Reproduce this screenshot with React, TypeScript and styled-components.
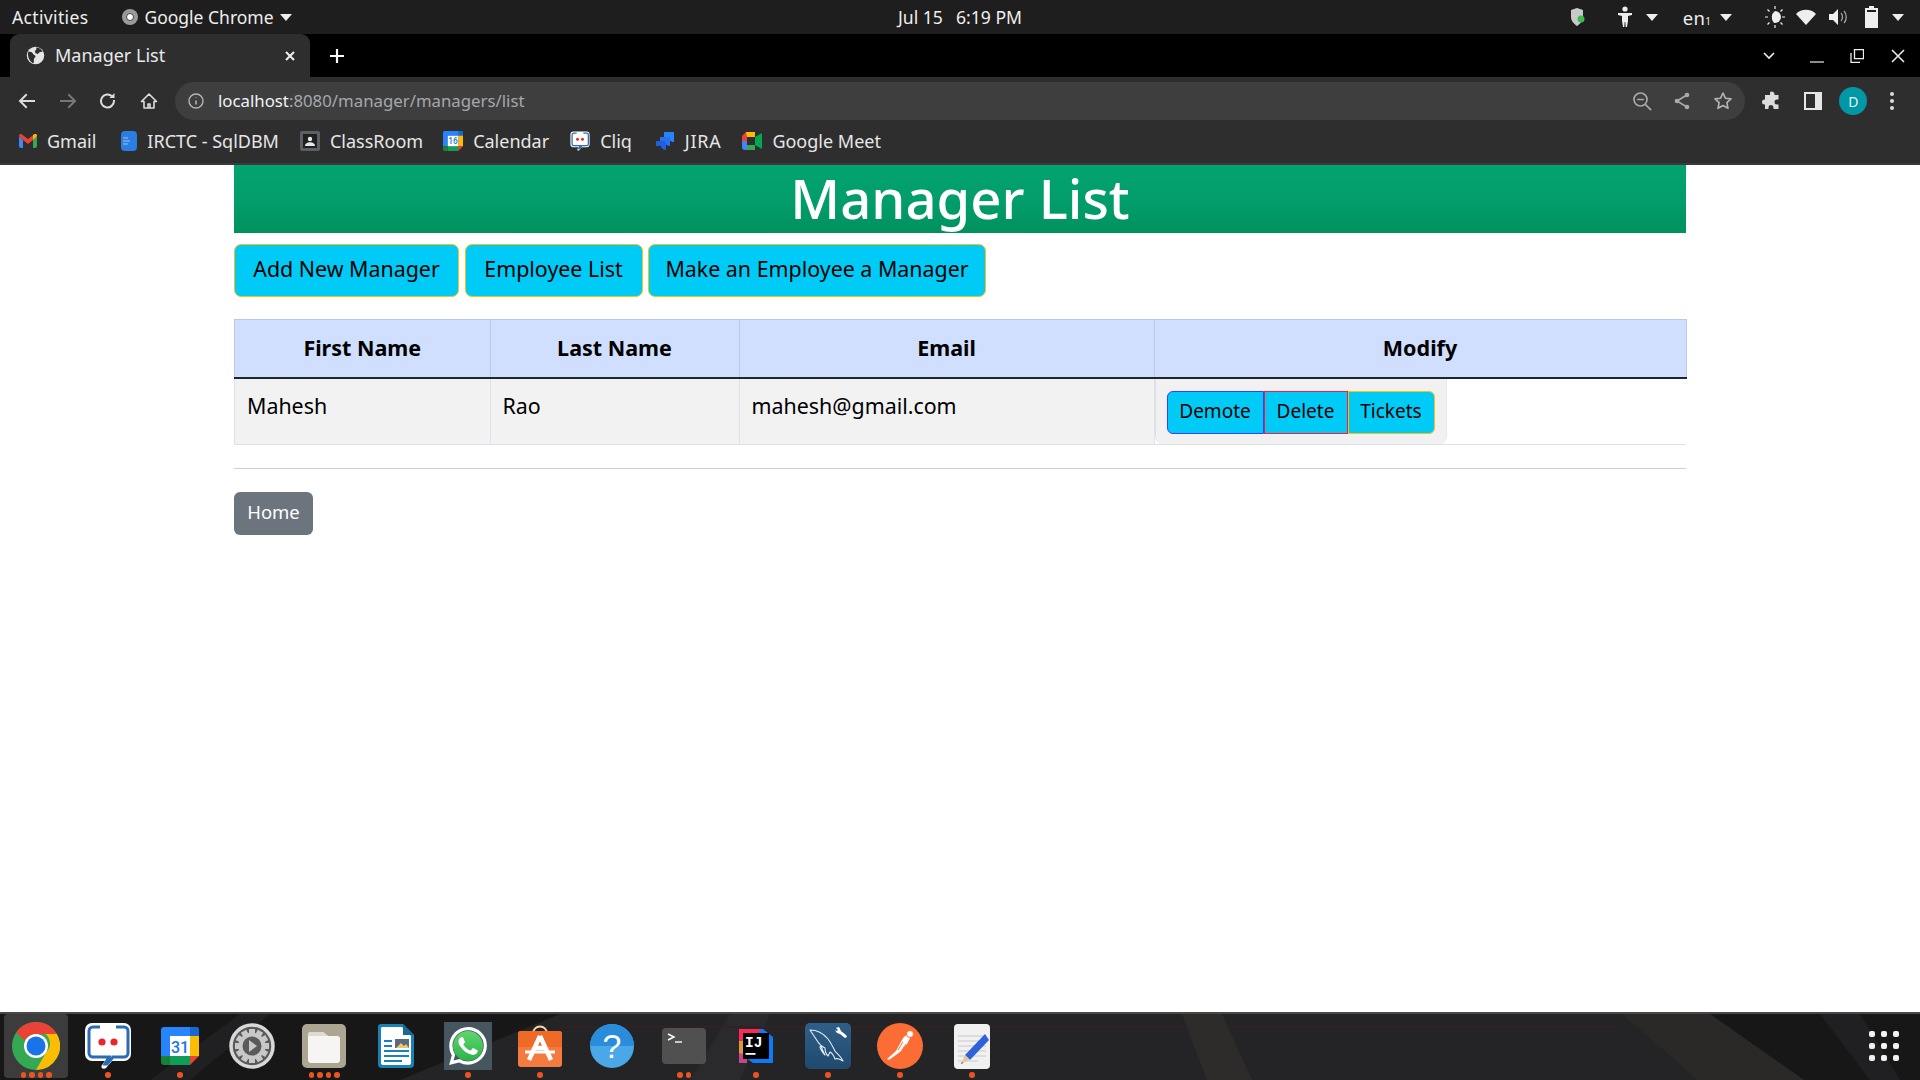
import React from "react";
import styled, { createGlobalStyle } from "styled-components";
import { SiWhatsapp } from "react-icons/si";

const UI = `"Noto Sans", "Open Sans", "DejaVu Sans", sans-serif`;

const Global = createGlobalStyle`
  html, body { margin: 0; padding: 0; height: 100%; background: #fff; overflow: hidden; }
  #root { height: 100%; }
  * { box-sizing: border-box; }
  body { font-family: ${UI}; }
`;

const Screen = styled.div`
  width: 1920px;
  height: 1080px;
  display: flex;
  flex-direction: column;
`;

/* ---------- GNOME top bar ---------- */
const TopBar = styled.div`
  height: 34px;
  flex: none;
  background: #1e1e1e;
  color: #eeeeec;
  display: grid;
  grid-template-columns: 1fr auto 1fr;
  align-items: center;
  font-size: 17.5px;
  padding: 0 12px;
`;
const BarLeft = styled.div`
  display: flex;
  align-items: center;
`;
const Activities = styled.span`
  letter-spacing: 0.35px;
`;
const BarRight = styled.div`
  display: flex;
  align-items: center;
  justify-content: flex-end;
  height: 100%;
  padding-right: 3px;
`;
const AppName = styled.span`
  display: flex;
  align-items: center;
  gap: 6px;
  margin-left: 34px;
`;
const Clock = styled.div`
  display: flex;
  gap: 13px;
  font-size: 17.6px;
`;
const Tray = styled.span<{ $w: number; $ml: number }>`
  width: ${(p) => p.$w}px;
  margin-left: ${(p) => p.$ml}px;
  display: flex;
  justify-content: center;
  align-items: center;
  flex: none;
`;
const Lang = styled.span`
  font-size: 18.5px;
  letter-spacing: 0.3px;
  white-space: nowrap;
`;
const Sub = styled.span`
  font-size: 10px;
`;

/* ---------- Chrome ---------- */
const TabStrip = styled.div`
  height: 43px;
  flex: none;
  background: #000;
  display: flex;
  align-items: flex-end;
  padding-left: 10px;
  color: #fff;
`;
const Tab = styled.div`
  width: 300px;
  height: 43px;
  background: #2e2e2e;
  border-radius: 9px 9px 0 0;
  display: flex;
  align-items: center;
  padding: 0 14px 0 16px;
  font-size: 18px;
  color: #e8eaed;
`;
const TabTitle = styled.span`
  flex: 1;
  margin: 0 0 2px 10px;
`;
const NewTab = styled.span`
  width: 26px;
  height: 43px;
  margin-left: 14px;
  display: flex;
  align-items: center;
  justify-content: center;
`;
const WindowControls = styled.div`
  margin-left: auto;
  height: 43px;
  display: flex;
  align-items: center;
  padding-right: 2px;
`;
const Ctl = styled.span<{ $w: number }>`
  width: ${(p) => p.$w}px;
  display: flex;
  justify-content: center;
`;

const Toolbar = styled.div`
  height: 43px;
  flex: none;
  background: #2e2e2e;
  display: flex;
  align-items: flex-start;
  padding: 5px 0 0 7px;
  color: #c7c7c7;
`;
const NavBtn = styled.span<{ $w?: number }>`
  width: ${(p) => p.$w || 40.5}px;
  height: 38px;
  display: flex;
  align-items: center;
  justify-content: center;
  flex: none;
`;
const Omnibox = styled.div`
  margin: 0 7px 0 6px;
  width: 1570px;
  height: 38px;
  border-radius: 19px;
  background: #3e3e3e;
  display: flex;
  align-items: center;
  padding-left: 13px;
  flex: none;
`;
const Url = styled.div`
  margin: 0 0 2px 14px;
  font-size: 16.8px;
  color: #a4a8ad;
  flex: 1;
  white-space: nowrap;
`;
const UrlHost = styled.span`
  color: #f1f3f4;
`;
const OmniIcons = styled.div`
  display: flex;
  margin-right: 2px;
`;
const Avatar = styled.span`
  width: 28px;
  height: 28px;
  border-radius: 50%;
  background: #0097a7;
  color: #e6f7f9;
  font-size: 14px;
  display: flex;
  align-items: center;
  justify-content: center;
`;

const Bookmarks = styled.div`
  height: 45px;
  flex: none;
  background: #2e2e2e;
  border-bottom: 2px solid #3a3a3a;
  display: flex;
  align-items: center;
  padding: 0 0 2px 19px;
  gap: 20px;
`;
const Bookmark = styled.span<{ $ml?: number; $ls?: number }>`
  display: flex;
  align-items: center;
  gap: 10px;
  margin-left: ${(p) => p.$ml || 0}px;
  letter-spacing: ${(p) => p.$ls || 0}px;
  color: #e6e6e6;
  font-size: 18px;
  white-space: nowrap;
`;

/* ---------- page ---------- */
const Page = styled.main`
  flex: 1;
  background: #fff;
  padding: 0 234px;
  color: #000;
`;
const Title = styled.h1`
  margin: 0;
  height: 68px;
  line-height: 66px;
  text-align: center;
  font-size: 54.4px;
  font-weight: 500;
  color: #fff;
  background: linear-gradient(180deg, #02a370 0%, #029c69 60%, #01905e 100%);
`;
const Actions = styled.div`
  display: flex;
  gap: 5.5px;
  margin-top: 11px;
`;
const ActionButton = styled.button<{ $w: number }>`
  width: ${(p) => p.$w}px;
  height: 53px;
  padding: 0 0 4px;
  border: 1.5px solid #ffc107;
  border-radius: 7px;
  background: #00cbf6;
  color: #000;
  font-family: ${UI};
  font-size: 21.4px;
`;
const Table = styled.table`
  width: 1451.5px;
  margin-top: 22px;
  border-collapse: collapse;
  table-layout: fixed;
`;
const Th = styled.th`
  height: 58px;
  background: #cfdffd;
  border: 1px solid #b9c9e8;
  border-bottom: 2px solid #1f2530;
  font-size: 21.5px;
  font-weight: 700;
  text-align: center;
  padding: 0 0 2px;
`;
const Td = styled.td`
  height: 65px;
  background: #f2f2f2;
  border: 1px solid #dee2e6;
  border-top: none;
  font-size: 21.4px;
  vertical-align: top;
  padding: 12px 12px 0;
`;
const ModifyCell = styled.td`
  height: 65px;
  padding: 0;
  background: #fff;
  border-bottom: 1px solid #dee2e6;
`;
const ModifyBox = styled.div`
  width: 292px;
  height: 65px;
  background: #f1f1f1;
  border-radius: 0 0 8px 8px;
  border-left: 1px solid #dee2e6;
  border-right: 1px solid #e9e9e9;
  padding: 12px 0 0 11px;
  display: flex;
`;
const Seg = styled.button<{ $c: string; $w: number; $r?: string }>`
  width: ${(p) => p.$w}px;
  height: 43px;
  padding: 0 0 2px;
  background: #00cbf6;
  border: 1px solid ${(p) => p.$c};
  border-radius: ${(p) => p.$r || "0"};
  font-family: ${UI};
  font-size: 19px;
  color: #000;
`;
const Rule = styled.hr`
  margin: 23px 0 0;
  border: none;
  border-top: 1px solid #cfcfcf;
`;
const HomeButton = styled.button`
  display: block;
  width: 79px;
  height: 43px;
  margin-top: 23px;
  border: none;
  border-radius: 6px;
  background: #6c757d;
  color: #fff;
  font-family: ${UI};
  font-size: 18.5px;
  padding: 0 0 3px;
`;

/* ---------- dock ---------- */
const Dock = styled.footer`
  position: relative;
  height: 68px;
  flex: none;
  background: #1b1b1d;
  border-top: 2px solid #484848;
  display: flex;
  overflow: hidden;
`;
const Wood = styled.svg`
  position: absolute;
  inset: 0;
  width: 1920px;
  height: 66px;
`;
const DockSlot = styled.div<{ $active?: boolean }>`
  position: relative;
  width: 72px;
  height: 66px;
  flex: none;
  padding-top: 8px;
  &::before {
    content: "";
    display: ${(p) => (p.$active ? "block" : "none")};
    position: absolute;
    left: 4px;
    top: 0;
    width: 64px;
    height: 64px;
    background: #3c3c3c;
    border-radius: 4px;
  }
`;
const IconHolder = styled.div`
  position: relative;
  height: 48px;
  display: flex;
  align-items: center;
  justify-content: center;
`;
const TintBox = styled.span`
  position: relative;
  width: 48px;
  height: 48px;
  background: #45565f;
  display: flex;
  align-items: center;
  justify-content: center;
`;
const WaDisc = styled.span`
  width: 30px;
  height: 30px;
  border-radius: 50%;
  background: linear-gradient(180deg, #5fd66d, #2bb34a);
  display: flex;
  align-items: center;
  justify-content: center;
  overflow: visible;
  flex: none;
`;
const Dots = styled.span`
  position: absolute;
  bottom: 2.5px;
  left: 0;
  right: 0;
  display: flex;
  justify-content: center;
  gap: 3px;
`;
const Dot = styled.i`
  width: 5.5px;
  height: 5.5px;
  border-radius: 50%;
  background: #e95420;
`;
const Grid = styled.span`
  position: absolute;
  right: 21px;
  top: 17px;
  display: grid;
  grid-template-columns: repeat(3, 6px);
  gap: 6px 6px;
`;
const GridDot = styled.i`
  width: 6px;
  height: 6px;
  border-radius: 2px;
  background: #f2f2f2;
`;

/* ---------- icons ---------- */
const Caret = () => (
  <svg width="12" height="7" viewBox="0 0 12 7"><path d="M0 0h12L6 7z" fill="#eeeeec" /></svg>
);
const Globe = () => (
  <svg width="19" height="19" viewBox="0 0 24 24">
    <circle cx="12" cy="12" r="11" fill="#e6e6e6" />
    <path d="M3 7c3 0 5 1 6 3s3 1 3 3-2 2-2 4 0 4-1 5C5 20 1 13 3 7zM13 2c3 0 6 2 8 5l-4 1-2 2-3-1-1-3 2-1z" fill="#2e2e2e" />
  </svg>
);
const Stroke = (p: { s?: number; c?: string; vb?: number; children: React.ReactNode }) => (
  <svg width={p.s || 20} height={p.s || 20} viewBox={`0 0 ${p.vb || 20} ${p.vb || 20}`} fill="none" stroke={p.c || "#c7c7c7"} strokeWidth="2" strokeLinecap="square">
    {p.children}
  </svg>
);

const GoogleChrome = () => (
  <svg width="48" height="48" viewBox="0 0 48 48">
    <circle cx="24" cy="24" r="24" fill="#34a853" />
    <path d="M24 0a24 24 0 0 1 20.800 12H24a12 12 0 0 0-11 7L4.200 10.500A24 24 0 0 1 24 0z" fill="#ea4335" />
    <path d="M44.800 12A24 24 0 0 1 24 48l10.400-18a12 12 0 0 0-1-18z" fill="#fbbc04" />
    <circle cx="24" cy="24" r="12" fill="#fff" />
    <circle cx="24" cy="24" r="9.500" fill="#1a73e8" />
  </svg>
);
const CliqIcon = ({ s = 48 }: { s?: number }) => (
  <svg width={s} height={s} viewBox="0 0 48 48">
    <path d="M8 1h32a7 7 0 0 1 7 7v24a7 7 0 0 1-7 7H28l-6 7c-2 2-6 0-4-3l3-4H8a7 7 0 0 1-7-7V8a7 7 0 0 1 7-7z" fill="#fff" />
    <path d="M16 5H9a4 4 0 0 0-4 4v22a4 4 0 0 0 4 4h16l-4 7 2 0 6-7h11a4 4 0 0 0 4-4V9a4 4 0 0 0-4-4h-8" fill="none" stroke="#2a6cb5" strokeWidth="3" />
    <circle cx="18" cy="20" r="3.600" fill="#e8262b" />
    <circle cx="30" cy="20" r="3.600" fill="#e8262b" />
  </svg>
);
const CalendarIcon = ({ s = 38, label = "31" }: { s?: number; label?: string }) => (
  <svg width={s} height={s} viewBox="0 0 38 38">
    <path d="M3 0h32a3 3 0 0 1 3 3v6H29V9H9v20H0V3a3 3 0 0 1 3-3z" fill="#2684fc" />
    <path d="M29 0h6a3 3 0 0 1 3 3v6h-9z" fill="#1967d2" />
    <rect x="29" y="9" width="9" height="20" fill="#fbbc04" />
    <path d="M0 29h9v9H3a3 3 0 0 1-3-3z" fill="#188038" />
    <rect x="9" y="29" width="20" height="9" fill="#0f9d58" />
    <path d="M29 29h9l-9 9z" fill="#ea4335" />
    <rect x="9" y="9" width="20" height="20" fill="#fff" />
    <text x="19" y="25.500" textAnchor="middle" fontFamily="Roboto, sans-serif" fontSize="16" fontWeight="500" fill="#1a73e8">{label}</text>
  </svg>
);
const SettingsIcon = () => {
  const teeth = Array.from({ length: 12 }, (_, i) => i * 30);
  return (
    <svg width="46" height="46" viewBox="0 0 46 46">
      <circle cx="23" cy="23" r="21" fill="#5a5a5a" stroke="#d8d8d8" strokeWidth="3.500" />
      {teeth.map((a) => (
        <rect key={a} x="20" y="6" width="6" height="7" fill="#c8c8c8" transform={`rotate(${a} 23 23)`} />
      ))}
      <circle cx="23" cy="23" r="11.500" fill="#5a5a5a" stroke="#c8c8c8" strokeWidth="4" />
      <path d="M20 17l8 6-8 6z" fill="#c8c8c8" />
    </svg>
  );
};
const FilesIcon = () => (
  <svg width="44" height="44" viewBox="0 0 44 44">
    <rect width="44" height="44" rx="5" fill="#aca592" />
    <path d="M6 11a3 3 0 0 1 3-3h12l5 4h9a3 3 0 0 1 3 3v21a3 3 0 0 1-3 3H9a3 3 0 0 1-3-3z" fill="#f6f5f3" />
    <path d="M6 11a3 3 0 0 1 3-3h12l5 4H6z" fill="#dedbd2" />
  </svg>
);
const WriterIcon = () => (
  <svg width="36" height="44" viewBox="0 0 36 44">
    <path d="M3 0h22l11 11v29a4 4 0 0 1-4 4H4a4 4 0 0 1-4-4V3a3 3 0 0 1 3-3z" fill="#1a81b8" />
    <path d="M4 3h20l9 9v27a2 2 0 0 1-2 2H5a2 2 0 0 1-2-2V4z" fill="#fff" />
    <path d="M25 0l11 11H25z" fill="#176a98" />
    <path d="M6 16h8v2H6zM6 21h8v2H6zM6 26h25v2H6zM6 31h25v2H6zM6 36h18v2H6z" fill="#1a81b8" />
    <rect x="17" y="15" width="14" height="9" fill="#5a6b7b" />
    <path d="M18 24l5-5 3 3 2-2 3 4z" fill="#f2c46d" />
  </svg>
);
const StoreIcon = () => (
  <svg width="44" height="42" viewBox="0 0 44 42">
    <path d="M15 9c0-10 14-10 14 0" fill="none" stroke="#f5d9a6" strokeWidth="2" />
    <rect y="6" width="44" height="36" rx="3" fill="#f47a3f" />
    <path d="M0 9a3 3 0 0 1 3-3h38a3 3 0 0 1 3 3v13H0z" fill="#ef6a27" />
    <path d="M22 11L11 35M22 11l11 24M17 23h10" stroke="#fff" strokeWidth="4.500" fill="none" />
    <path d="M7 27h30" stroke="#fff" strokeWidth="3" />
  </svg>
);
const HelpIcon = () => (
  <svg width="44" height="44" viewBox="0 0 44 44">
    <circle cx="22" cy="22" r="22" fill="#4aa8e8" />
    <path d="M0 22a22 22 0 0 1 44 0z" fill="#2a8ddc" />
    <text x="22" y="34" textAnchor="middle" fontFamily="Liberation Sans, sans-serif" fontSize="34" fill="#fff">?</text>
  </svg>
);
const TerminalIcon = () => (
  <svg width="44" height="36" viewBox="0 0 44 36">
    <rect width="44" height="36" rx="4" fill="#505050" />
    <path d="M6 6l6 3-6 3" stroke="#fff" strokeWidth="1.400" fill="none" />
    <path d="M13 14h7" stroke="#fff" strokeWidth="1.400" />
  </svg>
);
const IntellijIcon = () => (
  <svg width="34" height="34" viewBox="0 0 34 34">
    <path d="M0 0h24L34 8v26H14L0 24z" fill="#087cfa" />
    <path d="M0 0h22L10 14 0 12z" fill="#fe2857" />
    <path d="M0 12h8v22H0z" fill="#d99a3c" />
    <path d="M0 24l8 2v8H0z" fill="#c7448f" />
    <rect x="4" y="4" width="26" height="26" fill="#000" />
    <text x="6" y="17.500" fontFamily="Liberation Mono, monospace" fontWeight="700" fontSize="14.500" fill="#fff">IJ</text>
    <rect x="6.500" y="24" width="10" height="1.800" fill="#fff" />
  </svg>
);
const MysqlIcon = () => (
  <svg width="46" height="46" viewBox="0 0 46 46">
    <defs>
      <linearGradient id="mysql-tile" x1="0" y1="0" x2="0" y2="1">
        <stop offset="0" stopColor="#2f5f88" />
        <stop offset="1" stopColor="#204a6e" />
      </linearGradient>
    </defs>
    <rect width="46" height="46" rx="5" fill="url(#mysql-tile)" />
    <path
      d="M5 7c6 0 13 3 18 9 3 4 5 8 7 12 2 3 6 5 8 10-3-2-6-3-8-2-1-3-3-6-5-7l-2 4c-2-2-3-4-3-8-3-1-5-3-7-6L9 13 5 7zM16 23c1 4 3 7 4 9-2-2-5-5-5-9"
      fill="none"
      stroke="#e3edf4"
      strokeWidth="1.100"
      strokeLinejoin="round"
    />
    <path d="M31 5c2-1 4-1 4 1l1 2 5 4 1 2-2 1-5-4-3-1-2-3 2 1 1-1z" fill="#fff" />
  </svg>
);
const PostmanIcon = () => (
  <svg width="46" height="46" viewBox="0 0 46 46">
    <circle cx="23" cy="23" r="23" fill="#fb6d35" />
    <path d="M10 36l9-8 6-11c1-3 4-5 6-5l2 3-3 6-7 8-11 8z" fill="#fff" />
    <circle cx="33" cy="11" r="3.500" fill="#fff" stroke="#fb6d35" strokeWidth="1" />
    <path d="M21 27l5-8M25 27l4-6" stroke="#fb6d35" strokeWidth="1" />
  </svg>
);
const EditorIcon = () => (
  <svg width="36" height="45" viewBox="0 0 36 45">
    <rect width="36" height="45" rx="4" fill="#f1f1f1" />
    <path d="M4 12h28M4 17h28M4 22h28M4 27h28M4 32h28M4 37h20" stroke="#c9c9c9" strokeWidth="1" />
    <path d="M31 10L11 31l5 5 19-20z" fill="#2f62d9" />
    <path d="M11 31l-4 9 9-4z" fill="#e3c9a1" />
    <path d="M8 38l-1 2 2-1z" fill="#333" />
  </svg>
);

const apps: { key: string; dots: number; node: React.ReactNode; active?: boolean }[] = [
  { key: "chrome", dots: 4, node: <GoogleChrome />, active: true },
  { key: "cliq", dots: 1, node: <CliqIcon /> },
  { key: "cal", dots: 1, node: <CalendarIcon /> },
  { key: "settings", dots: 0, node: <SettingsIcon /> },
  { key: "files", dots: 4, node: <FilesIcon /> },
  { key: "writer", dots: 0, node: <WriterIcon /> },
  { key: "wa", dots: 1, node: <TintBox><WaDisc><SiWhatsapp size={38} color="#fff" style={{ flex: "none" }} /></WaDisc></TintBox> },
  { key: "store", dots: 1, node: <StoreIcon /> },
  { key: "help", dots: 0, node: <HelpIcon /> },
  { key: "term", dots: 2, node: <TerminalIcon /> },
  { key: "ij", dots: 1, node: <IntellijIcon /> },
  { key: "mysql", dots: 1, node: <MysqlIcon /> },
  { key: "postman", dots: 1, node: <PostmanIcon /> },
  { key: "editor", dots: 1, node: <EditorIcon /> },
];

const columns = [255.5, 249, 415, 532];

export default function App() {
  return (
    <Screen>
      <Global />
      <TopBar>
        <BarLeft>
          <Activities>Activities</Activities>
          <AppName>
            <svg width="16" height="16" viewBox="0 0 16 16">
              <circle cx="8" cy="8" r="8" fill="#9a9a9a" />
              <circle cx="8" cy="8" r="3.500" fill="#fff" stroke="#444" strokeWidth="1" />
            </svg>
            Google Chrome
            <Caret />
          </AppName>
        </BarLeft>
        <Clock><span>Jul 15</span><span>6:19 PM</span></Clock>
        <BarRight>
          <Tray $w={20} $ml={0}>
            <svg width="14" height="18" viewBox="0 0 14 18">
              <path d="M6 0l6 2v7c0 4-3 7-6 9-3-2-6-5-6-9V2z" fill="#c9c9c9" />
              <circle cx="10" cy="11" r="3.500" fill="#3fb950" />
            </svg>
          </Tray>
          <Tray $w={20} $ml={27}>
            <svg width="16" height="22" viewBox="0 0 16 22">
              <circle cx="8" cy="3" r="2.600" fill="#eee" />
              <path d="M1 7h14v2l-4 1v5l-1 6H8.700l-.4-5h-.6l-.4 5H6l-1-6v-5L1 9z" fill="#eee" />
            </svg>
          </Tray>
          <Tray $w={14} $ml={10}><Caret /></Tray>
          <Tray $w={30} $ml={23}><Lang>en<Sub>1</Sub></Lang></Tray>
          <Tray $w={14} $ml={7}><Caret /></Tray>
          <Tray $w={24} $ml={30}>
            <svg width="22" height="24" viewBox="0 0 22 24">
              <circle cx="11" cy="12" r="6" fill="#eee" />
              <path d="M11 6a6 6 0 0 0-1 12 8 8 0 0 1 1-12z" fill="#1e1e1e" />
              <path d="M11 1v3M11 20v3M1 12h3M18 12h3M3.500 4.500l2 2M16.500 17.500l2 2M18.500 4.500l-2 2M5.500 17.500l-2 2" stroke="#eee" strokeWidth="1.200" />
            </svg>
          </Tray>
          <Tray $w={24} $ml={7}>
            <svg width="20" height="16" viewBox="0 0 20 16"><path d="M10 16L0 5a14 14 0 0 1 20 0z" fill="#eee" /></svg>
          </Tray>
          <Tray $w={22} $ml={10}>
            <svg width="20" height="18" viewBox="0 0 20 18">
              <path d="M0 6h4l5-5v16l-5-5H0z" fill="#eee" />
              <path d="M12 5c2 2 2 6 0 8M15 3c3 3 3 9 0 12" stroke="#aaa" strokeWidth="1.200" fill="none" />
            </svg>
          </Tray>
          <Tray $w={14} $ml={14}>
            <svg width="13" height="22" viewBox="0 0 13 22">
              <path d="M4 0h5v2h4v20H0V2h4z" fill="#eee" />
              <rect x="2" y="4" width="9" height="16" fill="#1e1e1e" />
              <rect x="2" y="6" width="9" height="14" fill="#eee" />
            </svg>
          </Tray>
          <Tray $w={14} $ml={13}><Caret /></Tray>
        </BarRight>
      </TopBar>

      <TabStrip>
        <Tab>
          <Globe />
          <TabTitle>Manager List</TabTitle>
          <svg width="12" height="12" viewBox="0 0 12 12"><path d="M2 2l8 8M10 2l-8 8" stroke="#f0f0f0" strokeWidth="2" /></svg>
        </Tab>
        <NewTab>
          <svg width="16" height="16" viewBox="0 0 16 16"><path d="M8 1v14M1 8h14" stroke="#fff" strokeWidth="2.200" /></svg>
        </NewTab>
        <WindowControls>
          <Ctl $w={58}><svg width="14" height="10" viewBox="0 0 14 10"><path d="M2 2l5 5 5-5" fill="none" stroke="#eee" strokeWidth="1.600" /></svg></Ctl>
          <Ctl $w={38}><svg width="14" height="14" viewBox="0 0 14 14"><path d="M0 13h14" stroke="#bbb" strokeWidth="1.500" /></svg></Ctl>
          <Ctl $w={42}><svg width="14" height="14" viewBox="0 0 14 14"><path d="M4.500.700h9v9h-9zM1 4v9.300h9" fill="none" stroke="#eee" strokeWidth="1.300" /></svg></Ctl>
          <Ctl $w={40}><svg width="14" height="14" viewBox="0 0 14 14"><path d="M1 1l12 12M13 1L1 13" stroke="#eee" strokeWidth="1.500" /></svg></Ctl>
        </WindowControls>
      </TabStrip>

      <Toolbar>
        <NavBtn><Stroke><path d="M17 10H4M9 4l-6 6 6 6" stroke="#dcdcdc" /></Stroke></NavBtn>
        <NavBtn><Stroke><path d="M3 10h13M11 4l6 6-6 6" stroke="#777" /></Stroke></NavBtn>
        <NavBtn><Stroke><path d="M16 10a6.500 6.500 0 1 1-2-4.700" stroke="#dcdcdc" /><path d="M16.500 2v5h-5z" fill="#dcdcdc" stroke="none" /></Stroke></NavBtn>
        <NavBtn><Stroke><path d="M10 3l7.500 7.500H15V17H5v-6.500H2.500zM9 17v-4h2v4" stroke="#dcdcdc" strokeWidth="1.600" strokeLinejoin="round" /></Stroke></NavBtn>
        <Omnibox>
          <Stroke s={16} vb={16} c="#b5b5b5"><circle cx="8" cy="8" r="7" strokeWidth="1.400" /><path d="M8 7.500v4M8 4.500v.5" strokeWidth="1.600" strokeLinecap="butt" /></Stroke>
          <Url><UrlHost>localhost</UrlHost>:8080/manager/managers/list</Url>
          <OmniIcons>
            <NavBtn><Stroke s={20}><circle cx="8.500" cy="8.500" r="6.500" stroke="#a9a9a9" strokeWidth="1.700" /><path d="M6 8.500h5M13.500 13.500l5 5" stroke="#a9a9a9" strokeWidth="1.700" /></Stroke></NavBtn>
            <NavBtn><Stroke s={20}><path d="M15 4L5 10l10 6" stroke="#a9a9a9" strokeWidth="1.700" /><circle cx="15" cy="4" r="2.300" fill="#a9a9a9" stroke="none" /><circle cx="15" cy="16" r="2.300" fill="#a9a9a9" stroke="none" /><circle cx="5" cy="10" r="2.300" fill="#a9a9a9" stroke="none" /></Stroke></NavBtn>
            <NavBtn><Stroke s={20}><path d="M10 2l2.400 5.200 5.600.7-4.100 3.800 1.100 5.600L10 14.500l-5 2.800 1.100-5.600L2 7.900l5.600-.7z" stroke="#b5b5b5" strokeWidth="1.600" strokeLinejoin="round" /></Stroke></NavBtn>
          </OmniIcons>
        </Omnibox>
        <NavBtn>
          <svg width="20" height="20" viewBox="0 0 20 20"><path d="M8 1.500a2.500 2.500 0 0 1 4.500 1.500v1h4v4.500h-1.500a2.500 2.500 0 0 0 0 5h1.500V18h-5v-1.500a2.500 2.500 0 0 0-5 0V18H3v-4.500h-.5a2.500 2.500 0 0 1 0-5H3V4h5z" fill="#dcdcdc" /></svg>
        </NavBtn>
        <NavBtn>
          <svg width="18" height="18" viewBox="0 0 18 18"><path d="M0 0h18v18H0zM2 2v14h9V2z" fill="#e6e6e6" fillRule="evenodd" /><rect x="11" y="2" width="5" height="14" fill="#e6e6e6" /></svg>
        </NavBtn>
        <NavBtn><Avatar>D</Avatar></NavBtn>
        <NavBtn $w={37}>
          <svg width="4" height="18" viewBox="0 0 4 18"><circle cx="2" cy="2" r="2" fill="#dcdcdc" /><circle cx="2" cy="9" r="2" fill="#dcdcdc" /><circle cx="2" cy="16" r="2" fill="#dcdcdc" /></svg>
        </NavBtn>
      </Toolbar>

      <Bookmarks>
        <Bookmark>
          <svg width="18" height="14" viewBox="0 0 18 14">
            <path d="M0 2v10a2 2 0 0 0 2 2h2V6z" fill="#4285f4" />
            <path d="M18 2v10a2 2 0 0 1-2 2h-2V6z" fill="#34a853" />
            <path d="M0 2c0-2 2-2.500 3-1.500L9 5l6-4.500c1-1 3-.5 3 1.500l-4 4-5 4-5-4z" fill="#ea4335" />
            <path d="M14 .9l1-.4c1-1 3-.5 3 1.500l-4 4z" fill="#fbbc04" />
          </svg>
          Gmail
        </Bookmark>
        <Bookmark $ml={5}>
          <svg width="16" height="20" viewBox="0 0 16 20">
            <path d="M4 0h8a4 4 0 0 1 4 4v12a4 4 0 0 1-4 4H4a4 4 0 0 1-4-4V4a4 4 0 0 1 4-4z" fill="#2a7de1" />
            <path d="M2 7h5M2 10h7M2 13h5" stroke="#9cc4f5" strokeWidth="1.200" />
          </svg>
          IRCTC - SqlDBM
        </Bookmark>
        <Bookmark $ml={1}>
          <svg width="20" height="20" viewBox="0 0 20 20">
            <rect width="20" height="20" rx="2" fill="#5b5f66" />
            <rect x="3" y="3" width="14" height="14" fill="#1f1f1f" />
            <circle cx="10" cy="8" r="2.200" fill="#e6e6e6" />
            <path d="M5 15c0-5 10-5 10 0z" fill="#e6e6e6" />
          </svg>
          ClassRoom
        </Bookmark>
        <Bookmark><CalendarIcon s={20} label="16" />Calendar</Bookmark>
        <Bookmark $ml={1}><CliqIcon s={20} />Cliq</Bookmark>
        <Bookmark $ml={3} $ls={0.7}>
          <svg width="20" height="20" viewBox="0 0 20 20">
            <path d="M9 1h10v10c-3 0-5-2-5-5H9z" fill="#2684ff" />
            <path d="M5 6h10v9c-3 0-5-2-5-4H5z" fill="#2a6ff0" />
            <path d="M1 10h10v9c-3 0-5-2-5-4H1z" fill="#1f5fe0" />
          </svg>
          JIRA
        </Bookmark>
        <Bookmark $ml={1}>
          <svg width="20" height="18" viewBox="0 0 20 18">
            <path d="M4 0h9v5H5v4H0V4z" fill="#ea4335" />
            <path d="M0 9h5v4h8v5H3a3 3 0 0 1-3-3z" fill="#4285f4" />
            <path d="M4 0h9v5H5z" fill="#fbbc04" />
            <path d="M5 13h8v5H5z" fill="#34a853" />
            <path d="M13 5v8l7 4V1z" fill="#00a94f" />
            <rect x="5" y="5" width="8" height="8" fill="#2e2e2e" />
          </svg>
          Google Meet
        </Bookmark>
      </Bookmarks>

      <Page>
        <Title>Manager List</Title>
        <Actions>
          <ActionButton $w={225}>Add New Manager</ActionButton>
          <ActionButton $w={178}>Employee List</ActionButton>
          <ActionButton $w={338}>Make an Employee a Manager</ActionButton>
        </Actions>
        <Table>
          <colgroup>
            {columns.map((w) => <col key={w} width={w} />)}
          </colgroup>
          <thead>
            <tr>
              <Th>First Name</Th>
              <Th>Last Name</Th>
              <Th>Email</Th>
              <Th>Modify</Th>
            </tr>
          </thead>
          <tbody>
            <tr>
              <Td>Mahesh</Td>
              <Td>Rao</Td>
              <Td>mahesh@gmail.com</Td>
              <ModifyCell>
                <ModifyBox>
                  <Seg $c="#3d3dff" $w={97} $r="6px 0 0 6px">Demote</Seg>
                  <Seg $c="#ff1744" $w={84}>Delete</Seg>
                  <Seg $c="#ffc107" $w={87} $r="0 6px 6px 0">Tickets</Seg>
                </ModifyBox>
              </ModifyCell>
            </tr>
          </tbody>
        </Table>
        <Rule />
        <HomeButton>Home</HomeButton>
      </Page>

      <Dock>
        <Wood viewBox="0 0 1920 66" preserveAspectRatio="none">
          <path d="M0 0h1920v66H0z" fill="#171718" />
          <path d="M560 0h1150l94 66H400z" fill="#242427" />
          <path d="M730 0h40l-30 66h-50z" fill="#2a2a2c" />
          <path d="M560 13h1060" stroke="#2e2222" strokeWidth="2" />
          <path d="M1182 0h40l30 66h-45z" fill="#2d2c2a" />
          <path d="M1622 0h88l94 66h-106z" fill="#2a2927" />
          <path d="M150 66l90-66h30l-80 66z" fill="#202022" />
          <path d="M1820 0h40l40 66h-30z" fill="#202022" />
        </Wood>
        {apps.map((a) => (
          <DockSlot key={a.key} $active={a.active}>
            <IconHolder>{a.node}</IconHolder>
            <Dots>
              {Array.from({ length: a.dots }, (_, i) => <Dot key={i} />)}
            </Dots>
          </DockSlot>
        ))}
        <Grid>
          {Array.from({ length: 9 }, (_, i) => <GridDot key={i} />)}
        </Grid>
      </Dock>
    </Screen>
  );
}
